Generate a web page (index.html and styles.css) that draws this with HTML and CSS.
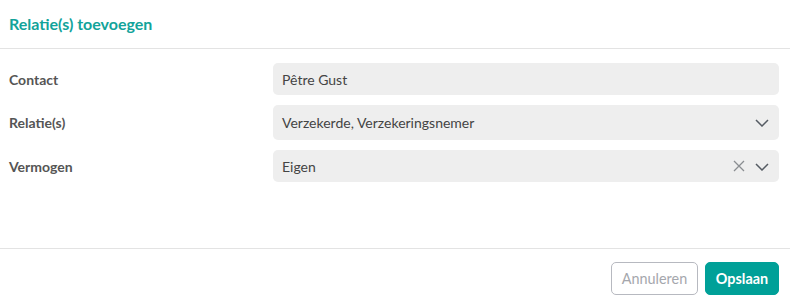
FILE: index.html
```html
<!DOCTYPE html>
<html lang="nl">
<head>
<meta charset="utf-8">
<link rel="stylesheet" href="styles.css">
</head>
<body>
<div class="modal">
  <header class="modal-header">
    <h1 class="modal-title">Relatie(s) toevoegen</h1>
  </header>
  <section class="modal-body">
    <div class="row">
      <label class="label">Contact</label>
      <div class="field field-contact"><span class="value">Pêtre Gust</span></div>
    </div>
    <div class="row">
      <label class="label">Relatie(s)</label>
      <div class="field field-select field-tall">
        <span class="value">Verzekerde, Verzekeringsnemer</span>
        <span class="icons">
          <svg class="chev" width="14" height="8" viewBox="0 0 14 8"><path d="M1 1 L7 7 L13 1" fill="none" stroke="#555b63" stroke-width="1.5"/></svg>
        </span>
      </div>
    </div>
    <div class="row">
      <label class="label">Vermogen</label>
      <div class="field field-select">
        <span class="value">Eigen</span>
        <span class="icons">
          <svg class="clear" width="12" height="12" viewBox="0 0 12 12"><path d="M1 1 L11 11 M11 1 L1 11" fill="none" stroke="#8a8d91" stroke-width="1.3"/></svg>
          <svg class="chev" width="14" height="8" viewBox="0 0 14 8"><path d="M1 1 L7 7 L13 1" fill="none" stroke="#555b63" stroke-width="1.5"/></svg>
        </span>
      </div>
    </div>
  </section>
  <footer class="modal-footer">
    <button class="btn btn-secondary">Annuleren</button>
    <button class="btn btn-primary">Opslaan</button>
  </footer>
</div>
</body>
</html>
```

FILE: styles.css
```css
* { box-sizing: border-box; }
html, body { margin: 0; padding: 0; background: #fff; }
body {
  font-family: Lato, "Open Sans", sans-serif;
  width: 790px;
  height: 308px;
  overflow: hidden;
}
.modal { display: flex; flex-direction: column; height: 308px; }
.modal-header {
  height: 49px;
  padding: 0 9px;
  display: flex;
  align-items: center;
  border-bottom: 1px solid #e3e3e3;
}
.modal-title {
  margin: 0;
  font-size: 16px;
  font-weight: 700;
  color: #12a39a;
  padding-bottom: 1px;
}
.modal-body {
  flex: 1;
  padding: 14px 11px 0 9px;
  display: flex;
  flex-direction: column;
  gap: 10px;
}
.row {
  display: grid;
  grid-template-columns: 264px 1fr;
  align-items: center;
}
.label {
  font-size: 14px;
  font-weight: 700;
  color: #555;
}
.field {
  height: 32px;
  background: #eeeeee;
  border-radius: 5px;
  display: flex;
  align-items: center;
  padding: 0 10px 0 9px;
  font-size: 14px;
  color: #444;
}
.field-tall { height: 35px; }
.value { flex: 1; }
.icons { display: flex; align-items: center; gap: 10px; }
.chev { display: block; margin-top: 1px; }
.clear { display: block; }
.modal-footer {
  height: 60px;
  border-top: 1px solid #e3e3e3;
  display: flex;
  justify-content: flex-end;
  align-items: center;
  gap: 7px;
  padding: 0 11px 0 0;
}
.btn {
  height: 33px;
  border-radius: 5px;
  font-family: Lato, "Open Sans", sans-serif;
  font-size: 14.4px;
  padding: 0 8px;
  cursor: pointer;
}
.btn-secondary {
  width: 87px;
  background: #fff;
  border: 1px solid #b7b9c0;
  color: #a5a7ad;
}
.btn-primary {
  width: 74px;
  background: #00a098;
  border: 1px solid #00a098;
  color: #fff;
  font-weight: 700;
}
```
